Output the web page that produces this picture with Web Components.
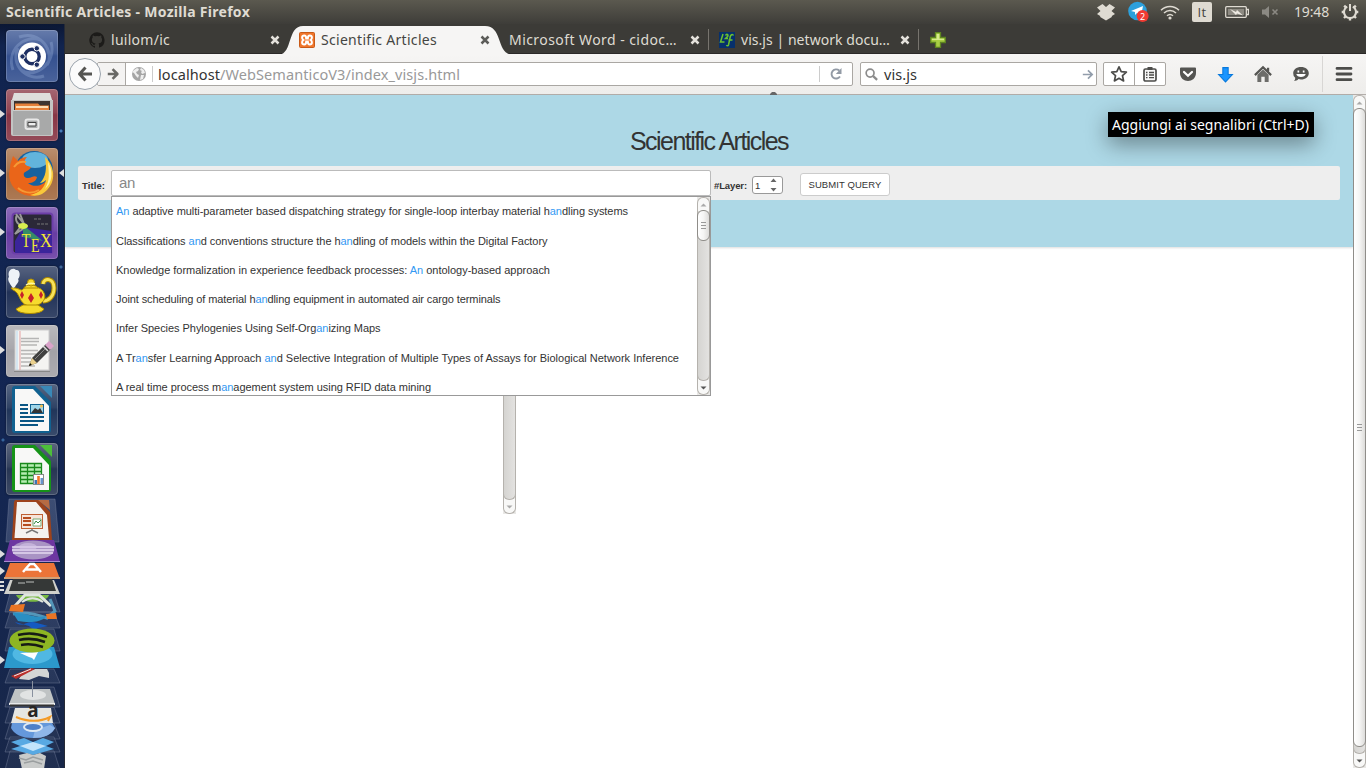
<!DOCTYPE html>
<html lang="it">
<head>
<meta charset="utf-8">
<title>Scientific Articles</title>
<style>
html,body{margin:0;height:100%;overflow:hidden;background:#fff}
body{font-family:"Noto Sans","Open Sans",sans-serif}
</style>
</head>
<body>
<desktop-screen></desktop-screen>
<script>
const ICONS = {
  github: ['0 0 16 16', '<path fill="#1c1b19" d="M8 .2a8 8 0 0 0-2.5 15.5c.4.1.5-.2.5-.4v-1.5c-2 .4-2.6-.6-2.8-1.1-.1-.2-.5-.9-.8-1.1-.3-.1-.7-.5 0-.5s1.100.6 1.300.8c.7 1.200 1.900.9 2.300.7.1-.5.3-.9.5-1.100-1.800-.2-3.600-.9-3.600-3.900 0-.9.3-1.600.8-2.100 0-.2-.3-1 .1-2.100 0 0 .7-.2 2.200.8a7.400 7.400 0 0 1 4 0c1.500-1 2.200-.8 2.200-.8.4 1.100.1 1.900.1 2.100.5.6.8 1.300.8 2.100 0 3.100-1.900 3.700-3.600 3.900.3.3.5.7.5 1.500v2.200c0 .2.1.5.5.4A8 8 0 0 0 8 .2z"/>'],
  xampp: ['0 0 16 16', '<rect x=".5" y=".5" width="15" height="15" rx="1" fill="#f0762c" stroke="#c85a18"/><path d="M5.200 3.500c-2.800 0-2.500 3.300-.9 4.500-1.600 1.200-1.900 4.500.9 4.500 2 0 2-2.200 2-3h1.600c0 .8 0 3 2 3 2.800 0 2.500-3.300.9-4.500 1.600-1.200 1.900-4.500-.9-4.500-2 0-2 2.200-2 3H7.200c0-.8 0-3-2-3z" fill="none" stroke="#fff" stroke-width="2"/>'],
  l2f: ['0 0 16 16', '<rect width="16" height="16" fill="#06306c"/><path d="M4 2 1.500 10H5.500M6.500 3.500c1-2 3.500-1 2 1L6.500 6.500H9M14.500 3.500c-1-2-3-.5-3.300 1.500L9.500 13c-.3 1-1.500 1-2 0M9.500 8h4" fill="none" stroke="#6cc02f" stroke-width="1.500"/>'],
  close: ['0 0 10 10', '<path d="M1.500 1.500 8.500 8.500M8.500 1.500 1.500 8.500" stroke="currentColor" stroke-width="2.500"/>'],
  plus: ['0 0 16 16', '<path d="M5.500.7h5v4.800h4.800v5h-4.800v4.800h-5v-4.800H.7v-5h4.800z" fill="#a9cf43" stroke="#5d8420" stroke-width="1.300"/><path d="M6.700 2h2.600v4.700H14V8H2V6.700h4.700z" fill="#d6ea8e"/>'],
  back: ['0 0 16 16', '<path d="M8.500 1.500 2.500 8l6 6.500M2.500 8H15" fill="none" stroke="#555552" stroke-width="3" stroke-linejoin="round"/>'],
  forward: ['0 0 16 16', '<path d="M7.500 2.500 13 8l-5.500 5.500M13 8H2" fill="none" stroke="#696966" stroke-width="3" stroke-linejoin="round"/>'],
  globe: ['0 0 16 16', '<circle cx="8" cy="8" r="7" fill="#a5a5a5"/><path d="M3 4l3-2 2 1-1 2-2 1 1 2 2 1-1 3-2-2-2-3-2-1zM10 2l3 2 1 3-3 1-1-2 1-1-2-1zM10 9l3 0-1 4-3 1z" fill="#eee"/>'],
  reload: ['0 0 16 16', '<path d="M12 10.500A4.600 4.600 0 1 1 11.200 4.500" fill="none" stroke="#929aa5" stroke-width="1.900"/><path d="M13.500 2v6H7.800z" fill="#929aa5"/>'],
  search: ['0 0 16 16', '<circle cx="6.500" cy="6.500" r="4.200" fill="none" stroke="#8c8c8c" stroke-width="1.800"/><path d="m9.800 9.800 4.200 4" stroke="#8c8c8c" stroke-width="2.400"/>'],
  go: ['0 0 16 16', '<path d="M3 8h9M8.500 3.500 13 8l-4.500 4.500" fill="none" stroke="#929dab" stroke-width="1.800"/>'],
  star: ['0 0 18 18', '<path d="m9 1.800 2.200 4.800 5.200.6-3.900 3.500 1.100 5.200L9 13.300l-4.600 2.600 1.100-5.200-3.900-3.500 5.200-.6z" fill="#fff" stroke="#4c4c4a" stroke-width="1.700" stroke-linejoin="round"/>'],
  list: ['0 0 16 16', '<rect x="2" y="3" width="12" height="12" rx="1.500" fill="#f7f7f7" stroke="#4c4c4a" stroke-width="1.700"/><path d="M5.500 1h5v3h-5z" fill="#4c4c4a"/><path d="M4 6.500h1.500M7 6.500h5M4 9h1.500M7 9h5M4 11.700h1.500M7 11.700h5" stroke="#4c4c4a" stroke-width="1.300"/>'],
  pocket: ['0 0 18 18', '<path d="M2 2.500h14a1 1 0 0 1 1 1V8c0 5-4 8-8 8s-8-3-8-8V3.500a1 1 0 0 1 1-1z" fill="#555552"/><path d="m5 7 4 3.800L13 7" fill="none" stroke="#fff" stroke-width="2.200" stroke-linecap="round"/>'],
  download: ['0 0 16 16', '<path d="M5.500 1.500h5V8h4L8 15 1.500 8h4z" fill="#1a95ff" stroke="#0879dc"/>'],
  home: ['0 0 16 16', '<path d="M.8 9 8 2l7.200 7M12.500 2.500v3" fill="none" stroke="#555552" stroke-width="2"/><path d="M3 8.700 8 4l5 4.700V15H9.500v-4.500h-3V15H3z" fill="#6c6c69"/>'],
  chat: ['0 0 18 18', '<path d="M9 2c4.600 0 7.800 2.600 7.800 6.200S13.500 14.500 9 14.500c-1 0-1.800-.1-2.600-.4C5.500 15.500 3.500 16 2 16c1-.8 1.200-2 1.200-3.200A5.700 5.700 0 0 1 1.200 8.200C1.200 4.600 4.400 2 9 2z" fill="#555552"/><path d="M5.500 5.500h1.700v2H5.500zM10.800 5.500h1.700v2h-1.700zM4.300 9h9.400c-.5 4-8.900 4-9.400 0z" fill="#fff"/>'],
  menu: ['0 0 16 16', '<path d="M1.800 3h12.400M1.800 8h12.400M1.800 13h12.400" stroke="#4c4c4a" stroke-width="2.500" stroke-linecap="round"/>'],
  dropbox: ['0 0 18 18', '<path d="M5.500 1 9 4l3.500-3L18 4.500 14.500 8l3.500 3-3.200 2v1L9 17.500 3.200 14v-1L0 11l3.500-3L0 4.500z" fill="#dfdbd2"/>'],
  telegram: ['0 0 21 22', '<circle cx="9.500" cy="10" r="9.300" fill="#2ca0dc"/><path d="m3 10 12-5-2 10-4-3-2 2 0-3z" fill="#fff"/><circle cx="14.600" cy="15" r="6" fill="#f03a32"/><text x="14.600" y="18.500" text-anchor="middle" font-family="Noto Sans" font-size="9" fill="#fff">2</text>'],
  wifi: ['0 0 20 16', '<path d="M1 6.300c5-5 13-5 18 0M4 9c3.500-3.500 8.500-3.500 12 0M7 11.800c2-1.800 4-1.800 6 0" fill="none" stroke="#dfdbd2" stroke-width="1.500"/><circle cx="10" cy="14" r="1.600" fill="#dfdbd2"/>'],
  battery: ['0 0 24 14', '<rect x=".7" y="1.700" width="20.600" height="10.600" rx="1" fill="none" stroke="#dfdbd2" stroke-width="1.300"/><path d="M21 4.500h2.500v5H21" fill="none" stroke="#dfdbd2" stroke-width="1.300"/><rect x="2.800" y="3.800" width="16.400" height="6.400" fill="#8d8a82"/><path d="m5 4 6 3 1-2 6 5.500-6-2-1 1.500z" fill="#eeeae2"/>'],
  mute: ['0 0 20 14', '<path d="M2 4.500h3L9 1v12L5 9.500H2z" fill="#8b8983"/><path d="m12.500 4.500 5 5m0-5-5 5" stroke="#8b8983" stroke-width="1.600"/>'],
  gear: ['0 0 18 18', '<path d="M6.200 3.700a6 6 0 1 0 5.600 0M9 1v7" fill="none" stroke="#dfdbd2" stroke-width="2"/><path d="M3.200 2.700 5 4.500M14.800 2.700 13 4.500M.7 9h2.500M14.800 9h2.500M3 15l2-2M15 15l-2-2M9 14.500V17.500" stroke="#dfdbd2" stroke-width="2.400"/>'],

  ubuntu: ['0 0 52 52', '<g fill="none" stroke="#a7bce4" stroke-width="3" opacity=".3"><path d="M7 40C0 20 18 4 35 10M13 7c22-8 36 16 28 28M45 12c6 20-15 38-30 28M38 46C20 52 4 34 12 18"/></g><circle cx="26" cy="26.500" r="14" fill="#fff"/><circle cx="26" cy="26.500" r="7.200" fill="none" stroke="#1d2f63" stroke-width="3.400"/><g fill="#1d2f63" stroke="#fff"><circle cx="16.500" cy="26.500" r="2.700"/><circle cx="30.800" cy="18.300" r="2.700"/><circle cx="30.800" cy="34.700" r="2.700"/></g>'],
  files: ['0 0 52 52', '<path d="M8 4h36l3 10H5z" fill="#dededd"/><path d="M5 11h42v34a2 2 0 0 1-2 2H7a2 2 0 0 1-2-2z" fill="#c3c4c3"/><path d="M8 12h36v10H8z" fill="#3d3430"/><path d="M9 14.500h23l2 2h9V22H9z" fill="#e6813a"/><path d="M10 18h32" stroke="#ffe9c3" stroke-width="1.800"/><path d="M7 21h38v25H7z" fill="#a8a9a9"/><path d="M7 21.500h38" stroke="#ccc"/><rect x="19.500" y="30.500" width="13" height="9.500" rx="2" fill="#a9aaaa" stroke="#e8e8e8" stroke-width="2"/><path d="M22 33.500h8v3.500h-8z" fill="#eee" stroke="#444"/>'],
  firefox: ['0 0 52 52', '<circle cx="28" cy="22" r="19" fill="#17629f"/><ellipse cx="29" cy="12" rx="13" ry="8" fill="#62b4dc"/><path d="M7 8l5 5c3-3 6-4 9-4-2 2-3 4-2 7 1 2 4 2 6 3-1 3-5 4-7 6-1 3 1 5 4 5 4 0 6-3 9-1-1 4-4 6-9 6 7 6 18 2 21-7 3 10-5 20-17 20C10 48 0 34 4 20c0-5 2-8 3-12z" fill="#ea6519"/><path d="M39 9c11 10 12 28-3 37-4 2-9 2-12 1 10-2 15-8 16-15-2 2-4 3-6 3 6-6 7-14 5-26z" fill="#f9c83a"/><path d="M42 14c6 10 4 21-3 27 5-9 4-14 3-27z" fill="#fff3a8"/><path d="M8 19c4-5 7-6 12-5M12 40c6 5 14 6 21 2" stroke="#f69a35" stroke-width="2" fill="none"/>'],
  tex: ['0 0 52 52', '<rect x="6.500" y="6.500" width="40" height="40" rx="3" fill="#2b2838" stroke="#6d3fa8" stroke-width="2"/><path d="M17 20 46 24v22H9V34z" fill="#3b259a"/><path d="m17 18 20 16-20-4z" fill="#348c68"/><path d="M16 18 9 27l8-5M10 7l8 10-4-10M18 17c-5 3-10-3-7-9" stroke="#999" stroke-width="2" fill="none"/><ellipse cx="17" cy="19" rx="5" ry="3" fill="#d8ef4f"/><path d="M28 12h8M31 17h12" stroke="#777" stroke-dasharray="3 1"/><g fill="#f2e735" font-family="Liberation Serif" font-size="19"><text x="15.500" y="40" textLength="9" lengthAdjust="spacingAndGlyphs">T</text><text x="25" y="45" textLength="8.500" lengthAdjust="spacingAndGlyphs">E</text><text x="34" y="40" textLength="12" lengthAdjust="spacingAndGlyphs">X</text></g>'],
  lamp: ['0 0 52 52', '<g stroke="#b08c00" fill="#f6db2e"><path d="M37 18c1-7 11-6 11 4 0 8-5 13-11 13" fill="none" stroke="#b08c00" stroke-width="5"/><path d="M37 18c1-7 11-6 11 4 0 8-5 13-11 13" fill="none" stroke="#f8e25a" stroke-width="3"/><path d="M5 22c8-1 10 4 12 1 3-3 13-3 18 0 8 7 3 17-10 17-11 0-11-11-15-14-2-2-4-2-5-4z"/><path d="M17 39h15l6 4c-2 6-26 6-28 0z"/><path d="M18 22c1-4 12-4 14 0z"/><circle cx="25" cy="16.500" r="3.500"/></g><path d="M20 19c3-2 6-2 9-1" stroke="#fff8a0" stroke-width="1.500" fill="none"/><path d="M7 22C3 17 1 13 3 11 1 4 7 1 10 4c4-1 5 6 2 9 2 3-2 5-3 8z" fill="#eef2f8"/><g fill="#c7212a"><path d="m16 25 2 4-2 4-2-4zM25 27l3 5-3 5-3-5zM35 25l2 4-2 4-2-4z"/></g>'],
  edit: ['0 0 52 52', '<rect x="9" y="5" width="34" height="40" fill="#f4f4f2" stroke="#ccc"/><path d="M8 46.500h36" stroke="#888"/><path d="M14 6v39" stroke="#e6a1a1"/><path d="M11 6v39" stroke="#b7d8ef"/><path d="M15 13.500h18M15 16.500h18M15 20h16M15 25.500h17M15 29h15M15 33h10M15 37h10M15 41h14" stroke="#b5b5b4" stroke-width="1.300"/><path d="m23 41 3-8 14-14 5 5-14 14z" fill="#3f403f"/><path d="m39 20 4-4 5 5-4 4z" fill="#d9a3c9"/><path d="m37 21 5 5" stroke="#ddd" stroke-width="1.500"/><path d="m29 34 10-10" stroke="#858585"/><path d="m23 41 3-8 5 5z" fill="#ebd18d"/><path d="m23 41 1-3 2 2z" fill="#000"/>'],
  writer: ['0 0 52 52', '<path d="M9 2h20l16 16v28a3 3 0 0 1-3 3H9a3 3 0 0 1-3-3V5a3 3 0 0 1 3-3z" fill="#116190"/><path d="M9 5h18l16 17v25H9z" fill="#f8f8f7"/><path d="M34 2h12v12z" fill="#3988b7"/><path d="M14 21h8M14 25h8M14 29h8M14 33h24M14 37h24M14 41h18" stroke="#0a5684" stroke-width="2"/><rect x="24.500" y="20.500" width="13" height="9" fill="#9fd5e8" stroke="#116190"/><path d="m25 29 4-5 3 2 2-2 3 5z" fill="#333"/><circle cx="35.500" cy="22" r="1.500" fill="#f3bd4c"/>'],
  calc: ['0 0 52 52', '<path d="M9 2h20l16 16v28a3 3 0 0 1-3 3H9a3 3 0 0 1-3-3V5a3 3 0 0 1 3-3z" fill="#169318"/><path d="M9 5h18l16 17v25H9z" fill="#f8f8f7"/><path d="M34 2h12v12z" fill="#4cbe39"/><path d="M14 20h22v21H14z" fill="#b5edb1"/><path d="M14.500 20.500h21v20h-21zM14 24.500h22M14 28.500h22M14 32.500h22M14 36.500h22M21.500 20v21M28.500 20v21" stroke="#18891b" stroke-width="1.300" fill="none"/><rect x="27.500" y="31.500" width="10" height="10" fill="#fff" stroke="#888"/><path d="M28.500 37h2.500v4h-2.500z" fill="#3e76b4"/><path d="M31.200 33h2.600v8h-2.600z" fill="#ef7829"/><path d="M34.500 35h2.500v6h-2.500z" fill="#6794cb"/>'],
  stack: ['0 497 65 271', `
    <defs><linearGradient id="gl" x2="0" y2="1"><stop offset="0" stop-color="#8795b2" stop-opacity=".35"/><stop offset="1" stop-color="#42506f" stop-opacity=".2"/></linearGradient></defs>
    <g fill="url(#gl)" stroke="#7c88a2" stroke-opacity=".5" stroke-width=".8"><path d="M9 498h46l4 43H6zM10 592h44l6 19H5zM10 611h44l6 16H5zM10 628h44l6 22H5zM10 668h44l6 14H5zM10 686h44l6 20H5zM10 706h44l6 16H5zM10 722h44l6 16H5zM10 736h44l6 15H5zM10 750h44l6 19H5z"/></g>
    <path d="M15 499h24l11 12 2 28a2 2 0 0 1-2 2H14a2 2 0 0 1-2-2l2-38z" fill="#9d431c"/><path d="M17 501h19l11 13 2 23H14.500z" fill="#f4f2ef"/><path d="M38 499h11l1 10z" fill="#b66b43"/><rect x="21.500" y="513.500" width="21" height="14" fill="#f6e5da" stroke="#bf6134"/><path d="M23 517h8M23 520h8M23 524h8" stroke="#b64d1f" stroke-width="2"/><path d="M33 518h8v7h-8z" fill="#fff" stroke="#7a7"/><path d="m34 523 2-3 2 2 3-3" fill="none" stroke="#378a42"/><path d="M32 528v2M26 532l6-3 6 3" stroke="#777" stroke-width="1.500" fill="none"/>
    <path d="M10 539h44l6 22H4z" fill="#6d36a1"/><path d="M4 560.500h56" stroke="#aa8bd0"/><ellipse cx="33" cy="549" rx="21" ry="9.500" fill="#a993c4"/><path d="M12 546h42M12 549h42M13 552h40" stroke="#e4d7f0" stroke-width="1.300"/><ellipse cx="28" cy="546" rx="9" ry="4" fill="#d7c6e7" opacity=".6"/>
    <path d="M10 562h44l6 16H4z" fill="#ec7438"/><path d="M4 577h56" stroke="#d2a179" stroke-width="2"/><path d="m23 571 7-8h4l7 8M26 568.500h12" fill="none" stroke="#fff" stroke-width="2.500"/>
    <path d="M10 579h44l6 14H4z" fill="#d0d0cb"/><path d="M13 578h39l4 12H9z" fill="#353837"/><path d="M18 582h7M26 581h8" stroke="#bdbfbd"/>
    <path d="M16 594h33c-2 9-30 9-33 0z" fill="#79b943"/><path d="m15 605 10-11h14l12 11" fill="none" stroke="#dfe5df" stroke-width="3"/><path d="M22 601c7-5 14-5 21 0" stroke="#dfe5df" stroke-width="2" fill="none"/>
    <path d="M13 613c12-3 26 1 34 4l8-7-5-12" fill="none" stroke="#5496b9" stroke-width="3"/><path d="m11 604 14-1-2 8-14-1z" fill="#e97524"/><path d="M13 612c14-1 22 6 34 3-7 7-18 7-29 5z" fill="#298fc3"/>
    <path d="M15 621c8 7 12-3 22 1l11 3-10 2-4 2-5-4z" fill="#145ac2"/><path d="m46 613 10-1 1 6H47z" fill="#e97524"/>
    <path d="M9 646h45l6 21H4z" fill="#2c99cc"/><ellipse cx="32.500" cy="653" rx="20" ry="10" fill="#50b8e3"/><path d="m20 652 18-1-4 8-2-2-3-1z" fill="#fff"/>
    <ellipse cx="32" cy="639.500" rx="22.500" ry="12" fill="#8eb523"/><path d="M18 634q14-4 29 2M19 639q13-3 26 2M21 644q11-2 22 2" fill="none" stroke="#171b15" stroke-width="2.500"/>
    <path d="M35 668h12l2 4v5l-10-2-10 4-10-1 3-5z" fill="#d4d6d5"/><path d="m11 675 20-8 4 1-19 10z" fill="#ba302b"/><path d="m14 675 17-7" stroke="#eee"/>
    <path d="M15 688h35l5 15H9z" fill="#bfc3c4"/><path d="M9 702h46v2H9z" fill="#e8e9e9"/><path d="M10 704.500h44" stroke="#333" stroke-width="2"/><ellipse cx="33" cy="694" rx="13" ry="5" fill="#e1e3e3"/><path d="M32.500 680v16" stroke="#89919f"/>
    <path d="M15 707h36l2 15H11z" fill="#e6e6e2"/><text x="33" y="716" text-anchor="middle" font-size="19" font-weight="bold" font-family="Noto Sans" fill="#272523">a</text><path d="M16 716c12 5 24 5 34 0l-2 4" fill="none" stroke="#f39b28" stroke-width="2"/>
    <path d="M12 722h40l3 5q-5 10-22 10t-22-10z" fill="#6598db"/><path d="M33 737q17 0 22-10l-5-3-15 5z" fill="#8fb6e8"/><ellipse cx="33" cy="726" rx="9" ry="4" fill="#4f80c8" stroke="#dfe9f3" stroke-width="2"/>
    <path d="m11 741 13-4 9 4 10-4 11 4-8 4 8 3-21 6-22-6 9-3z" fill="#58a9e3"/><path d="m20 745 13-4 13 4-13 5z" fill="#c3e4fb"/>
    <path d="m19 754 8-2 6 2 7-2 6 3-2 13H22z" fill="#c9cbca"/><path d="m19 757 7 2 7-3 10 3M24 762l9-2 9 3" stroke="#9b9fa0" stroke-width="1.500" fill="none"/>`]
};

const define = (name, render, after) => customElements.define(name, class extends HTMLElement {
  constructor(){ super(); this.attachShadow({mode:'open'}); }
  connectedCallback(){
    if (this.ready) return;
    this.ready = true;
    this.shadowRoot.innerHTML = render(this);
    if (after) after(this);
  }
});
const attr = (el, n, d='') => el.getAttribute(n) ?? d;

define('ui-icon', el => {
  const [box, body] = ICONS[attr(el,'name')];
  const w = attr(el,'w','16'), h = attr(el,'h',w);
  return `<style>:host{display:block;flex:none;width:${w}px;height:${h}px}svg{display:block;width:100%;height:100%}</style><svg viewBox="${box}" preserveAspectRatio="none">${body}</svg>`;
});

/* GTK scroll bar: a trough with a thumb between two arrow buttons */
define('scroll-bar', el => `<style>
:host{display:flex;flex-direction:column;flex:none;width:13px;box-sizing:border-box;background:#e9e8e6}
.b{height:14px;flex:none;border:1px solid #b5b2ad;background:#f8f8f7;display:grid;place-items:center;box-sizing:border-box}
.b.u{border-radius:6px 6px 0 0;border-bottom:0}
.b.d{border-radius:0 0 6px 6px;border-top:0}
.mid{flex:1;display:flex;flex-direction:column;border:solid #b5b2ad;border-width:0 1px;background:#f8f8f7;min-height:0}
.tr{flex:1;display:flex;flex-direction:column;margin:0 -1px;border:solid #b5b2ad;border-width:0 1px 1px;background:linear-gradient(90deg,#d5d4d1,#e3e2e0);border-radius:0 0 6px 6px}
.thumb{box-sizing:border-box;border:1px solid #8f8d89;border-radius:6px;margin:-1px -1px 0;background:linear-gradient(90deg,#fff,#f5f5f4 50%,#dddcda);display:grid;place-content:center;gap:2px;${el.hasAttribute('fill')?'flex:1;margin-bottom:6px':`height:${attr(el,'thumb','0')}px`}}
.thumb i{width:5px;height:1px;background:#999}
svg{display:block}
</style><div class="b u"><svg width="7" height="4"><path d="M.5 3.500 3.500.5l3 3z" fill="#aaa"/></svg></div>
<div class="mid"><div class="tr">${el.hasAttribute('none')?'':'<div class="thumb"><i></i><i></i><i></i></div>'}</div></div>
<div class="b d"><svg width="7" height="4"><path d="M.5.5h6l-3 3z" fill="${attr(el,'down','#555')}"/></svg></div>`);

define('top-panel', () => `<style>
:host{display:flex;height:24px;align-items:center;justify-content:space-between;padding:0 7px 0 6px;box-sizing:border-box;background:linear-gradient(#5b594f,#3e3d39);color:#dfdbd2;font-size:14px}
.t{font-weight:700}
fit-text{position:relative;top:-1px}
.r{display:flex;align-items:center}
.it{width:20px;height:20px;border-radius:2px;background:#dfdbd2;color:#45443f;font-family:"Open Sans",sans-serif;font-size:13px;display:grid;place-items:center;margin:0 13px 0 12px;line-height:20px}
.it fit-text{top:0}
</style><fit-text class="t" w="244">Scientific Articles - Mozilla Firefox</fit-text>
<div class="r"><ui-icon name="dropbox" w="18" style="margin-right:13px"></ui-icon><ui-icon name="telegram" w="21" h="22" style="margin-right:11px"></ui-icon><ui-icon name="wifi" w="20" h="16"></ui-icon><div class="it"><fit-text w="9">It</fit-text></div><ui-icon name="battery" w="24" h="14" style="margin-right:11px"></ui-icon><ui-icon name="mute" w="20" h="14" style="margin-right:14px"></ui-icon><fit-text w="35" style="margin-right:12px">19:48</fit-text><ui-icon name="gear" w="18"></ui-icon></div>`);

define('app-tile', el => `<style>
:host{display:block;height:52px;margin:0 7px 7px 6px;position:relative}
.tile{width:52px;height:52px;box-sizing:border-box;border-radius:4px;background:linear-gradient(#ffffff44,#ffffff18 45%,#ffffff08 50%,#ffffff22),${attr(el,'bg')};box-shadow:inset 0 0 0 1px #ffffff30,0 0 2px #0008}
.l,.rr{position:absolute;top:21px;width:0;height:0;border:4px solid transparent}
.l{left:-6px;border-width:4px 0 4px 5px;border-left-color:#dedede}
.rr{right:-7px;border-width:4px 5px 4px 0;border-right-color:#dedede}
</style><div class="tile"><ui-icon name="${attr(el,'icon')}" w="52"></ui-icon></div>${el.hasAttribute('run')?'<i class="l"></i>':''}${el.hasAttribute('active')?'<i class="rr"></i>':''}`);

define('app-launcher', () => `<style>
:host{display:flex;flex-direction:column;box-sizing:border-box;width:65px;padding-top:6px;border-right:1px solid #262a35;overflow:hidden;position:relative;
background:radial-gradient(circle at 61px 107px,#477ab8 0 1px,#0000 2px),radial-gradient(circle at 61px 243px,#3e6596 0 1px,#0000 2px),radial-gradient(circle at 3px 416px,#36659d 0 1px,#0000 2px),linear-gradient(#0b1734,#11244f 22px,#132653 55%,#182749)}
.s{margin-top:-4px;position:relative}
.s i{position:absolute;left:0;border:solid transparent;border-width:4px 0 4px 5px;border-left-color:#ddd}
.s b{position:absolute;left:0;width:4px;height:2px;background:#ddd}
</style>
<app-tile icon="ubuntu" bg="#2e4b8c"></app-tile><app-tile icon="files" bg="#842f3f" run></app-tile><app-tile icon="firefox" bg="#a0653a" run active></app-tile><app-tile icon="tex" bg="#6336a0" run></app-tile><app-tile icon="lamp" bg="#1a2b52"></app-tile><app-tile icon="edit" bg="#a09fa4" run></app-tile><app-tile icon="writer" bg="#1a2f55"></app-tile><app-tile icon="calc" bg="#202f4e"></app-tile>
<div class="s"><ui-icon name="stack" w="65" h="271"></ui-icon><i style="top:52px"></i><i style="top:69px"></i><b style="top:83px"></b><b style="top:87px"></b><b style="top:91px"></b><i style="top:158px"></i></div>`);

define('browser-tab', el => {
  const on = el.hasAttribute('active'), ic = attr(el,'icon');
  return `<style>
:host{display:flex;align-items:center;box-sizing:border-box;width:210px;height:30px;padding:2px 9px 0 10px;position:relative;font-size:14px;color:${on?'#454542':'#dfdbd2'};${el.hasAttribute('sep')?'background:linear-gradient(#77746e,#77746e) 100% 5px/1px 21px no-repeat':''}}
svg.bg{position:absolute;left:-10px;top:2px;z-index:0}
ui-icon,fit-text{position:relative}
fit-text{top:-1px}
.x{margin-left:auto;color:${on?'#5c5c59':'#e5e2dc'}}
.f{margin-right:6px}
</style>${on?'<svg class="bg" width="233" height="29"><path d="M0 29c14-2 8-29 24-29h182c18 0 11 27 27 29z" fill="#f6f5f4"/></svg>':''}
${ic?`<ui-icon class="f" name="${ic}" w="16"></ui-icon>`:''}
<fit-text w="${attr(el,'w')}"><slot></slot></fit-text><ui-icon class="x" name="close" w="10"></ui-icon>`;
});

define('tab-strip', () => `<style>
:host{display:flex;height:30px;box-sizing:border-box;padding-left:14px;align-items:center;background:#3c3b37;box-shadow:inset 0 -1px #2b2928}
.p{margin:2px 0 0 11px}
</style><browser-tab icon="github" w="59">luilom/ic</browser-tab><browser-tab icon="xampp" w="116" active>Scientific Articles</browser-tab><browser-tab w="168" sep>Microsoft Word - cidoc…</browser-tab><browser-tab icon="l2f" w="149" sep>vis.js | network docu…</browser-tab><ui-icon class="p" name="plus" w="16"></ui-icon>`);

define('nav-bar', () => `<style>
:host{display:flex;height:41px;box-sizing:border-box;align-items:center;padding-left:4px;background:linear-gradient(#f6f5f4,#eeedeb);border-bottom:1px solid #b3aeaa;font-size:14.500px;color:#333}
.back{width:32px;height:32px;box-sizing:border-box;border:1px solid #9aa3ac;border-radius:50%;background:#fbfbfb;display:grid;place-items:center;position:relative;z-index:1;flex:none}
.box{display:flex;align-items:center;height:24px;box-sizing:border-box;border:1px solid #aaa7a3;background:#fff;border-radius:2px}
.url{width:756px;margin-left:-4px}
.fw{width:28px;align-self:stretch;display:flex;align-items:center;background:#f4f3f2;border-right:1px solid #aaa7a3;box-sizing:border-box;justify-content:flex-end;padding-right:5px}
.v{width:1px;height:16px;background:#ccc}
.url .g{margin:0 5px 0 5px}
.url{color:#999}.url b{font-weight:400;color:#333}
.search{width:237px;margin-left:7px;padding:0 1px 0 3px}
.two{margin-left:6px;width:63px}
.two div{flex:1;display:grid;place-items:center}
.two div+div{border-left:1px solid #aaa7a3;align-self:stretch}
.tools{display:flex;align-items:center;flex:1;padding-left:13px}
.tools ui-icon{margin-right:20px}
</style>
<div class="back"><ui-icon name="back" w="16"></ui-icon></div>
<div class="box url"><div class="fw"><ui-icon name="forward" w="14"></ui-icon></div><ui-icon class="g" name="globe" w="16"></ui-icon><span class="v"></span>
<fit-text w="302" style="margin-left:5px"><b>localhost</b>/WebSemanticoV3/index_visjs.html</fit-text>
<span class="v" style="margin-left:auto"></span><ui-icon name="reload" w="16" style="margin:0 8px"></ui-icon></div>
<div class="box search"><ui-icon name="search" w="15"></ui-icon><fit-text w="33" style="margin-left:5px">vis.js</fit-text><ui-icon name="go" w="15" style="margin-left:auto"></ui-icon></div>
<div class="box two"><div><ui-icon name="star" w="18"></ui-icon></div><div><ui-icon name="list" w="16"></ui-icon></div></div>
<div class="tools"><ui-icon name="pocket" w="18"></ui-icon><ui-icon name="download" w="17"></ui-icon><ui-icon name="home" w="18"></ui-icon><ui-icon name="chat" w="18" style="margin-right:12px"></ui-icon><span class="v" style="height:36px;background:#d8d6d4;margin-right:12px"></span><ui-icon name="menu" w="18" style="margin:0"></ui-icon></div>`);

define('suggestion-item', el => `<style>
:host{display:flex;align-items:center;height:29.300px;padding-left:4px;font-size:11px;color:#333;white-space:nowrap}
em{font-style:normal;color:#3399f3}
</style><fit-text w="${attr(el,'w')}">${el.textContent.replace(/an/gi,'<em>$&</em>')}</fit-text>`);

define('suggestion-list', () => `<style>
:host{position:absolute;width:600px;height:200px;box-sizing:border-box;border:1px solid #999;background:#fff;display:flex;z-index:2}
.l{flex:1;overflow:hidden}
suggestion-item:first-child{margin-top:-.4px}
</style><div class="l"><suggestion-item w="512">An adaptive multi-parameter based dispatching strategy for single-loop interbay material handling systems</suggestion-item>
<suggestion-item w="431.500">Classifications and conventions structure the handling of models within the Digital Factory</suggestion-item>
<suggestion-item w="434">Knowledge formalization in experience feedback processes: An ontology-based approach</suggestion-item>
<suggestion-item w="384.500">Joint scheduling of material handling equipment in automated air cargo terminals</suggestion-item>
<suggestion-item w="264.500">Infer Species Phylogenies Using Self-Organizing Maps</suggestion-item>
<suggestion-item w="563">A Transfer Learning Approach and Selective Integration of Multiple Types of Assays for Biological Network Inference</suggestion-item>
<suggestion-item w="315">A real time process management system using RFID data mining</suggestion-item>
</div><scroll-bar thumb="31"></scroll-bar>`);

define('query-form', () => `<style>
:host{display:flex;align-items:center;height:34px;box-sizing:border-box;background:#eee;border-radius:2px;position:relative;margin:0 13px;padding:0 4px;font-size:9.500px;color:#333}
b{font-weight:700;position:relative;top:2px}
.in{box-sizing:border-box;width:600px;height:26px;margin:0 3px 0 6px;border:1px solid #bbb;border-radius:2px;background:#fff;padding:0 7px;font-size:15px;color:#888;line-height:24px}
.n{box-sizing:border-box;width:31px;height:18px;border:1px solid #999;border-radius:3px;background:#fff;display:flex;align-items:center;justify-content:space-between;padding:0 5px 0 2px;margin:4px 17px 0 5px}
.btn{box-sizing:border-box;width:90px;height:23px;margin-top:3px;border:1px solid #ccc;border-radius:3px;background:#fff;display:grid;place-items:center}
suggestion-list{left:33px;top:30px}
</style><b><fit-text w="23">Title:</fit-text></b><div class="in"><fit-text w="16">an</fit-text></div><b><fit-text w="33">#Layer:</fit-text></b>
<div class="n"><span>1</span><svg width="7" height="14"><path d="M.5 4h6l-3-3.500zM.5 10h6l-3 3.500z" fill="#666"/></svg></div>
<div class="btn"><fit-text w="73">SUBMIT QUERY</fit-text></div><suggestion-list></suggestion-list>`);

define('web-page', () => `<style>
:host{display:block;flex:1;font-family:"Liberation Sans",Arial,sans-serif;background:#fff}
header{height:152px;box-sizing:border-box;background:#add8e6;box-shadow:0 1px 2px #0002}
h1{margin:0;height:71px;padding-top:31px;box-sizing:border-box;font-weight:400;font-size:25px;line-height:30px;text-align:center;color:#333}
.results{width:451px;height:267px;display:flex;justify-content:flex-end}
</style><header><h1><fit-text w="158">Scientific Articles</fit-text></h1><query-form></query-form></header>
<div class="results"><scroll-bar none down="#aaa"></scroll-bar></div>`);

define('tool-tip', () => `<style>
:host{position:absolute;left:1108px;top:112px;width:206px;height:25px;box-sizing:border-box;padding-left:4px;display:flex;align-items:center;background:#000;color:#fff;font-size:14px;box-shadow:0 7px 22px #0006;z-index:5}
</style><fit-text w="197"><slot></slot></fit-text>`);

define('desktop-screen', () => `<style>
:host{display:grid;grid-template:24px 744px/65px 1301px;width:1366px;height:768px;position:relative;overflow:hidden}
top-panel{grid-column:1/3}
.win{display:flex;flex-direction:column}
.view{display:flex;flex:1;min-height:0}
.mark{position:absolute;left:770px;top:92px}
</style><top-panel></top-panel><app-launcher></app-launcher>
<div class="win"><tab-strip></tab-strip><nav-bar></nav-bar><div class="view"><web-page></web-page><scroll-bar fill></scroll-bar></div></div>
<svg class="mark" width="7" height="3"><path d="M2 0h3l2 2v1H0V2z" fill="#666"/></svg>
<tool-tip>Aggiungi ai segnalibri (Ctrl+D)</tool-tip>`);

/* text set to a given advance width by adjusting its tracking */
define('fit-text', () => `<style>:host{display:inline-block;white-space:pre;flex:none}span{display:inline-block}</style><span><slot></slot></span>`, el => {
  const s = el.shadowRoot.querySelector('span'), w = +attr(el,'w');
  const slot = el.querySelector('slot');
  const text = slot ? slot.assignedNodes().map(n => n.textContent).join('') : el.textContent;
  const nat = s.getBoundingClientRect().width;
  if (nat) s.style.letterSpacing = (w - nat) / Math.max(1, text.length) + 'px';
  el.style.width = w + 'px';
});
</script>
</body>
</html>
